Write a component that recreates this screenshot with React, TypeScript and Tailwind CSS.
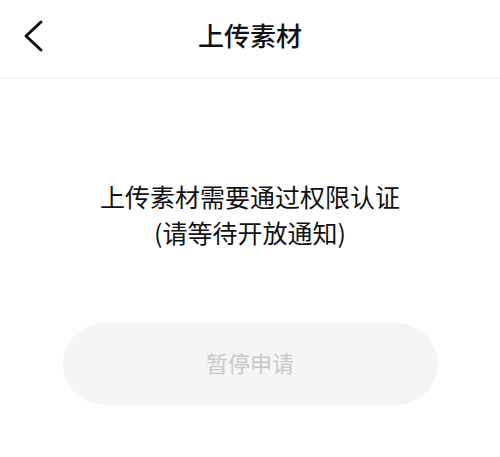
export default function App() {
  return (
    <div
      className="w-[500px] h-[457px] bg-white overflow-hidden"
      style={{ fontFamily: '"Noto Sans CJK SC", "Noto Sans", sans-serif' }}
    >
      {/* Header */}
      <header className="relative h-[79px] border-b border-[#efefef] flex items-center justify-center">
        <button className="absolute left-[22px] top-[19px] w-[24px] h-[34px] flex items-center justify-center">
          <svg width="24" height="34" viewBox="0 0 24 34" fill="none">
            <path
              d="M19 3 L4 17 L19 31"
              stroke="#111"
              strokeWidth="3"
              strokeLinecap="round"
              strokeLinejoin="round"
            />
          </svg>
        </button>
        <h1 className="text-[26px] leading-[36px] font-medium text-[#111] -mt-[9px]">上传素材</h1>
      </header>

      {/* Notice */}
      <div className="mt-[99px] flex flex-col items-center text-[25px] leading-[36px] text-[#111]">
        <p>上传素材需要通过权限认证</p>
        <p>(请等待开放通知)</p>
      </div>

      {/* Button */}
      <div className="mt-[73px] flex justify-center">
        <button
          disabled
          className="w-[375px] h-[82px] pb-[3px] rounded-full bg-[#f5f5f5] text-[22px] text-[#c8c8c8]"
        >
          暂停申请
        </button>
      </div>
    </div>
  );
}
